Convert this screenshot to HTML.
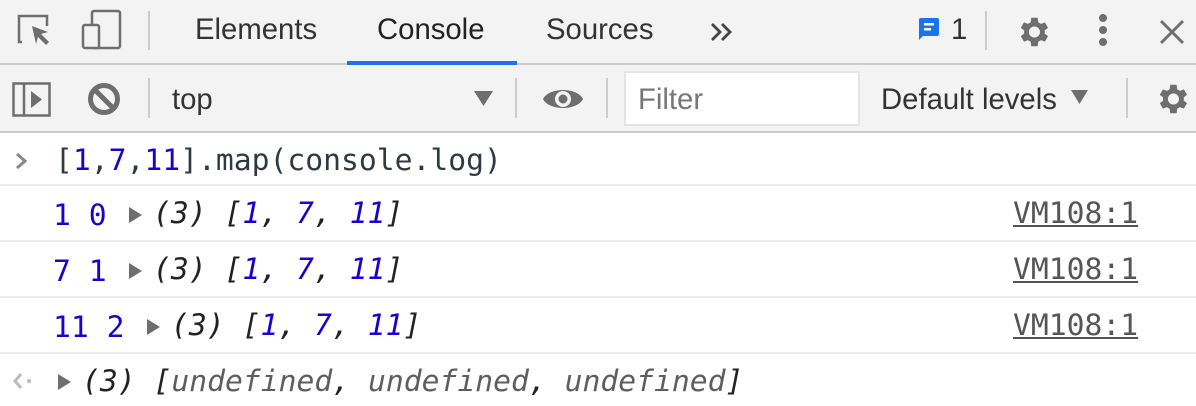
<!DOCTYPE html>
<html><head><style>
*{margin:0;padding:0;box-sizing:border-box}
body{width:1196px;height:406px;overflow:hidden;background:#fff;position:relative;font-family:"Liberation Sans",sans-serif}
.a{position:absolute;white-space:pre}
.m{font-family:"DejaVu Sans Mono","Liberation Mono",monospace;font-size:29.7px;line-height:34px}
.b{color:#1c00cf}
.i{font-style:italic}
.tab{font-size:29.3px;color:#333;top:13px}
.sep{position:absolute;width:2px;background:#ccc}
.tri{position:absolute;width:0;height:0;border-top:8px solid transparent;border-bottom:8px solid transparent;border-left:13px solid #6e6e6e}
.hl{position:absolute;left:0;width:1196px;height:2px;background:#ececec}
</style></head><body>
<div class="a" style="left:0;top:0;width:1196px;height:65px;background:#f3f3f3;border-bottom:2px solid #cbcbcb"></div>
<div class="a" style="left:0;top:65px;width:1196px;height:68px;background:#f3f3f3;border-bottom:2px solid #cbcbcb"></div>
<svg class="a" style="left:14px;top:12px" width="40" height="40" viewBox="0 0 40 40"><path d="M8 30H5V4h28v10" fill="none" stroke="#6e6e6e" stroke-width="2.5"/><path d="M18 14l16 6-7 2 8 8-3 3-8-8-2 7z" fill="#6e6e6e"/></svg>
<svg class="a" style="left:80px;top:8px" width="44" height="44" viewBox="0 0 44 44"><rect x="12" y="3" width="28" height="37" rx="2" fill="none" stroke="#6e6e6e" stroke-width="2.5"/><rect x="3" y="17" width="16" height="23" rx="2" fill="#f3f3f3" stroke="#6e6e6e" stroke-width="2.5"/></svg>
<div class="sep" style="left:148px;top:11px;height:39px"></div>
<div class="a tab" style="left:195px">Elements</div>
<div class="a tab" style="left:377px;color:#222">Console</div>
<div class="a" style="left:347px;top:61px;width:170px;height:4px;background:#1a73e8"></div>
<div class="a tab" style="left:546px">Sources</div>
<svg class="a" style="left:710px;top:22px" width="24" height="20" viewBox="0 0 24 20"><path d="M2 2l8 8-8 8M12 2l8 8-8 8" fill="none" stroke="#444" stroke-width="2.8"/></svg>
<svg class="a" style="left:918px;top:18px" width="22" height="22" viewBox="0 0 22 22"><path d="M1 2a2 2 0 012-2h16a2 2 0 012 2v14a2 2 0 01-2 2H5l-4 4z" fill="#1a73e8"/><rect x="6" y="5" width="10" height="2.5" fill="#fff"/><rect x="6" y="10" width="7" height="2.5" fill="#fff"/></svg>
<div class="a tab" style="left:951px">1</div>
<div class="sep" style="left:985px;top:11px;height:39px"></div>
<svg class="a" style="left:1014px;top:13px" width="38" height="38" viewBox="0 0 24 24"><path fill="#6e6e6e" d="M19.4 13a7.5 7.5 0 000-2l2.1-1.6-2-3.5-2.5 1a7.3 7.3 0 00-1.7-1L14.9 3h-4l-.4 2.9a7.3 7.3 0 00-1.7 1l-2.5-1-2 3.5L6.4 11a7.5 7.5 0 000 2l-2.1 1.6 2 3.5 2.5-1a7.3 7.3 0 001.7 1l.4 2.9h4l.4-2.9a7.3 7.3 0 001.7-1l2.5 1 2-3.5zM12.9 15.5a3.5 3.5 0 110-7 3.5 3.5 0 010 7z"/></svg>
<div class="a" style="left:1099px;top:14px;width:8px;height:8px;border-radius:50%;background:#6e6e6e;box-shadow:0 12px 0 #6e6e6e,0 24px 0 #6e6e6e"></div>
<svg class="a" style="left:1159px;top:19px" width="26" height="26" viewBox="0 0 26 26"><path d="M2 2L24 24M24 2L2 24" stroke="#6e6e6e" stroke-width="3"/></svg>
<svg class="a" style="left:12px;top:82px" width="40" height="36" viewBox="0 0 40 36"><rect x="1.5" y="1.5" width="36" height="32" fill="none" stroke="#6e6e6e" stroke-width="2.5"/><line x1="12" y1="1" x2="12" y2="34" stroke="#6e6e6e" stroke-width="2.5"/><path d="M19 9l11 8.5-11 8.5z" fill="#6e6e6e"/></svg>
<svg class="a" style="left:87px;top:82px" width="34" height="34" viewBox="0 0 34 34"><circle cx="17" cy="17" r="13.5" fill="none" stroke="#6e6e6e" stroke-width="5"/><line x1="8" y1="8" x2="26" y2="26" stroke="#6e6e6e" stroke-width="5"/></svg>
<div class="sep" style="left:148px;top:78px;height:40px"></div>
<div class="a tab" style="left:172px;top:83px">top</div>
<svg class="a" style="left:474px;top:91px" width="20" height="16"><path d="M0 0h19L9.5 15z" fill="#6e6e6e"/></svg>
<div class="sep" style="left:515px;top:78px;height:40px"></div>
<svg class="a" style="left:542px;top:84px" width="42" height="30" viewBox="0 0 42 30"><path d="M1 15C7 3 35 3 41 15 35 27 7 27 1 15z" fill="#6e6e6e"/><circle cx="21" cy="15" r="8" fill="#f3f3f3"/><circle cx="21" cy="15" r="4.5" fill="#6e6e6e"/></svg>
<div class="sep" style="left:606px;top:78px;height:40px"></div>
<div class="a" style="left:624px;top:71px;width:236px;height:55px;background:#fff;border:2px solid #e4e4e4"></div>
<div class="a tab" style="left:638px;top:83px;color:#777">Filter</div>
<div class="a tab" style="left:881px;top:83px">Default levels</div>
<svg class="a" style="left:1071px;top:90px" width="18" height="16"><path d="M0 0h17L8.5 14z" fill="#6e6e6e"/></svg>
<div class="sep" style="left:1126px;top:78px;height:40px"></div>
<svg class="a" style="left:1153px;top:80px" width="38" height="38" viewBox="0 0 24 24"><path fill="#6e6e6e" d="M19.4 13a7.5 7.5 0 000-2l2.1-1.6-2-3.5-2.5 1a7.3 7.3 0 00-1.7-1L14.9 3h-4l-.4 2.9a7.3 7.3 0 00-1.7 1l-2.5-1-2 3.5L6.4 11a7.5 7.5 0 000 2l-2.1 1.6 2 3.5 2.5-1a7.3 7.3 0 001.7 1l.4 2.9h4l.4-2.9a7.3 7.3 0 001.7-1l2.5 1 2-3.5zM12.9 15.5a3.5 3.5 0 110-7 3.5 3.5 0 010 7z"/></svg>
<svg class="a" style="left:15px;top:152px" width="14" height="18"><path d="M2 2l8 7-8 7" fill="none" stroke="#888" stroke-width="3"/></svg>
<div class="a m" style="left:55px;top:144px;color:#303942">[<span class="b">1</span>,<span class="b">7</span>,<span class="b">11</span>].map(console.log)</div>
<div class="hl" style="top:184px"></div>
<div class="a m b" style="left:53px;top:199px">1 0</div>
<div class="tri" style="left:129px;top:207px"></div>
<div class="a m i" style="left:153px;top:197px;color:#222">(3) [<span class="b">1</span>, <span class="b">7</span>, <span class="b">11</span>]</div>
<div class="a m" style="left:1013px;top:197px;color:#555;text-decoration:underline">VM108:1</div>
<div class="hl" style="top:240px"></div>
<div class="a m b" style="left:53px;top:255px">7 1</div>
<div class="tri" style="left:129px;top:263px"></div>
<div class="a m i" style="left:153px;top:253px;color:#222">(3) [<span class="b">1</span>, <span class="b">7</span>, <span class="b">11</span>]</div>
<div class="a m" style="left:1013px;top:253px;color:#555;text-decoration:underline">VM108:1</div>
<div class="hl" style="top:296px"></div>
<div class="a m b" style="left:53px;top:311px">11 2</div>
<div class="tri" style="left:147px;top:319px"></div>
<div class="a m i" style="left:171px;top:309px;color:#222">(3) [<span class="b">1</span>, <span class="b">7</span>, <span class="b">11</span>]</div>
<div class="a m" style="left:1013px;top:309px;color:#555;text-decoration:underline">VM108:1</div>
<div class="hl" style="top:352px"></div>
<svg class="a" style="left:12px;top:372px" width="22" height="18"><path d="M9 2L3 9l6 7" fill="none" stroke="#bbb" stroke-width="3"/><circle cx="17" cy="9" r="2" fill="#bbb"/></svg>
<div class="tri" style="left:58px;top:374px"></div>
<div class="a m i" style="left:82px;top:365px;color:#222">(3) [<span style="color:#5e5e5e">undefined</span>, <span style="color:#5e5e5e">undefined</span>, <span style="color:#5e5e5e">undefined</span>]</div>
</body></html>
